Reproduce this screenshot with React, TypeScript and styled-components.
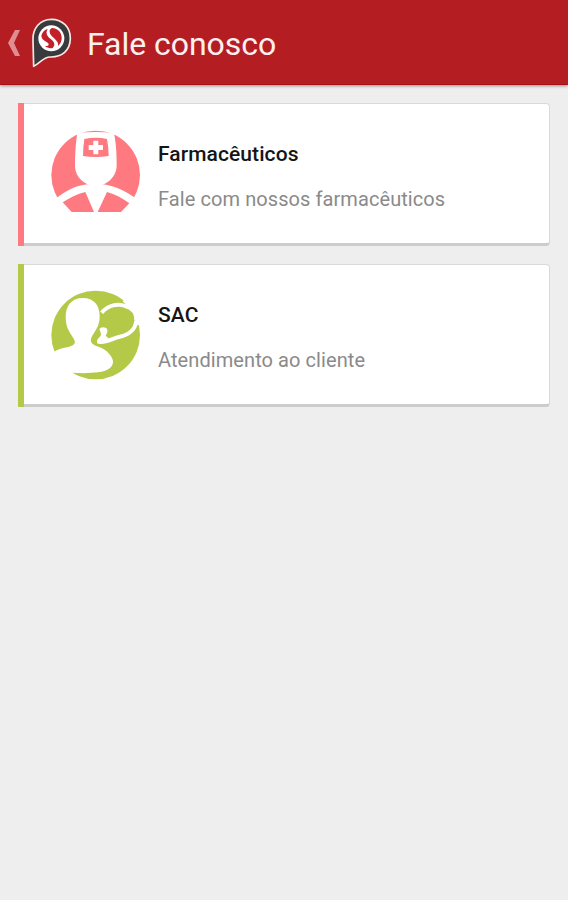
import React from "react";
import styled, { createGlobalStyle } from "styled-components";

const GlobalStyle = createGlobalStyle`
  * { box-sizing: border-box; }
  body { margin: 0; background: #eeeeee; font-family: Roboto, "Liberation Sans", sans-serif; }
`;

const Screen = styled.div`
  min-height: 900px;
  background: #eeeeee;
`;

const ActionBar = styled.header`
  display: flex;
  align-items: center;
  height: 85px;
  padding-left: 7px;
  background: #b41e23;
  border-bottom: 1px solid #a91116;
  box-shadow: 0 1px 3px rgba(0, 0, 0, 0.4);
`;

const BackIcon = styled.svg`
  width: 14px;
  height: 28px;
  margin-top: 2px;
`;

const Logo = styled.svg`
  width: 42px;
  height: 52px;
  margin: 2px 0 0 10px;
`;

const Title = styled.h1`
  margin: 3px 0 0 14px;
  font-size: 32px;
  line-height: 38px;
  font-weight: 400;
  letter-spacing: -0.05px;
  color: #fff0f0;
`;

const CardList = styled.main`
  display: flex;
  flex-direction: column;
  gap: 18px;
  padding: 18px 18px 0;
`;

const Card = styled.section<{ $accent: string }>`
  display: flex;
  height: 143px;
  border-radius: 0 4px 4px 0;
  background: linear-gradient(to right, ${(p) => p.$accent} 6px, transparent 6px);
`;

const CardBody = styled.div`
  display: flex;
  flex: 1;
  margin-left: 6px;
  padding: 26px 0 0 27px;
  background: #ffffff;
  border: solid #d9d9d9;
  border-width: 1px 1px 3px 0;
  border-bottom-color: #cccccc;
  border-radius: 0 4px 4px 0;
`;

const CardIcon = styled.svg`
  width: 90px;
  height: 90px;
  flex: none;
  overflow: visible;
`;

const CardText = styled.div`
  margin-left: 17px;
  padding-top: 11px;
`;

const CardTitle = styled.h2`
  margin: 0;
  font-size: 21px;
  line-height: 26px;
  font-weight: 500;
  letter-spacing: 0.08px;
  color: #151515;
`;

const CardDescription = styled.p`
  margin: 19px 0 0;
  font-size: 20px;
  line-height: 26px;
  letter-spacing: 0.08px;
  color: #8a8a8a;
`;

const PharmacistIcon = () => (
  <CardIcon viewBox="33 30 270 270">
    <defs>
      <clipPath id="pharmacist-disc">
        <path d="M33 30H303V276H33Z" />
      </clipPath>
    </defs>
    <circle cx="167" cy="165" r="133" fill="#ff7980" clipPath="url(#pharmacist-disc)" />
    <g fill="#fff">
      <path d="M112 40Q167 32 222 40C227 62 230 95 230 138C229 163 214 180 197 190Q167 206 137 190C119 179 106 163 105 138C105 95 108 62 112 40Z" />
      <path d="M30 236L50 234C85 207 116 194 150 192H185C220 196 252 210 288 235L303 232V278H30Z" />
    </g>
    <path d="M68 247C88 234 111 222 136 216L162 276H95Z M201 216C225 223 248 234 268 250L243 276H173Z" fill="#ff7980" />
    <path d="M133 57Q167 49 201 57Q206 82 206 108Q167 114 129 108Q129 82 133 57Z" fill="#ff7980" />
    <path d="M160 62H175V75H189V90H175V103H160V90H146V75H160Z" fill="#fff" />
  </CardIcon>
);

const SupportIcon = () => (
  <CardIcon viewBox="33 33 270 270">
    <circle cx="167" cy="165" r="133" fill="#b3c947" />
    <path
      d="M128 54C162 54 179 76 179 108C179 142 163 154 155 171C149 184 154 192 169 198C192 205 215 221 219 243C220 262 204 273 174 277C149 280 123 280 96 278L60 268L33 222C51 207 70 204 84 201C101 197 108 191 103 180C94 161 77 149 77 111C77 76 96 54 128 54Z"
      fill="#fff"
    />
    <path d="M185 98C204 75 234 69 256 78C278 84 290 100 289 122C286 150 264 165 239 170C217 174 208 188 178 186" fill="none" stroke="#fff" strokeWidth="12" />
    <path d="M178 147Q184 139 199 144Q204 149 202 157L197 167L204 173L208 184L196 190L173 191Q167 184 176 174Q184 169 183 161Z" fill="#fff" />
    <path d="M256 72L279 91L290 118L292 136L305 134L303 58L270 42L248 64Z" fill="#fff" />
  </CardIcon>
);

const options = [
  { title: "Farmacêuticos", description: "Fale com nossos farmacêuticos", accent: "#ff7980", Icon: PharmacistIcon },
  { title: "SAC", description: "Atendimento ao cliente", accent: "#b3c947", Icon: SupportIcon },
];

export default function App() {
  return (
    <Screen>
      <GlobalStyle />
      <ActionBar>
        <BackIcon viewBox="0 0 14 28">
          <path d="M8 1H13L7 14L13 27H8L1 14Z" fill="#df8d91" />
        </BackIcon>
        <Logo viewBox="93 21 126 156">
          <path
            d="M101 169L99 91C97 57 119 28 154 28C188 28 211 52 211 85C211 122 185 142 151 141C131 140 119 160 101 169Z"
            fill="#383b3d"
            stroke="#fbe7e4"
            strokeWidth="5"
            strokeLinejoin="round"
          />
          <circle cx="154" cy="85" r="39" fill="#fff" />
          <path d="M156 54C174 54 187 70 185 87C184 97 179 104 174 108C179 91 151 82 149 67C148 60 151 56 156 54Z" fill="#c3202a" />
          <path d="M143 57C135 71 143 80 153 88C163 95 167 105 158 114C149 116 141 113 135 108C141 109 147 107 146 102C144 95 125 93 124 77C127 66 134 59 143 57Z" fill="#c3202a" />
        </Logo>
        <Title>Fale conosco</Title>
      </ActionBar>
      <CardList>
        {options.map(({ title, description, accent, Icon }) => (
          <Card key={title} $accent={accent}>
            <CardBody>
              <Icon />
              <CardText>
                <CardTitle>{title}</CardTitle>
                <CardDescription>{description}</CardDescription>
              </CardText>
            </CardBody>
          </Card>
        ))}
      </CardList>
    </Screen>
  );
}
